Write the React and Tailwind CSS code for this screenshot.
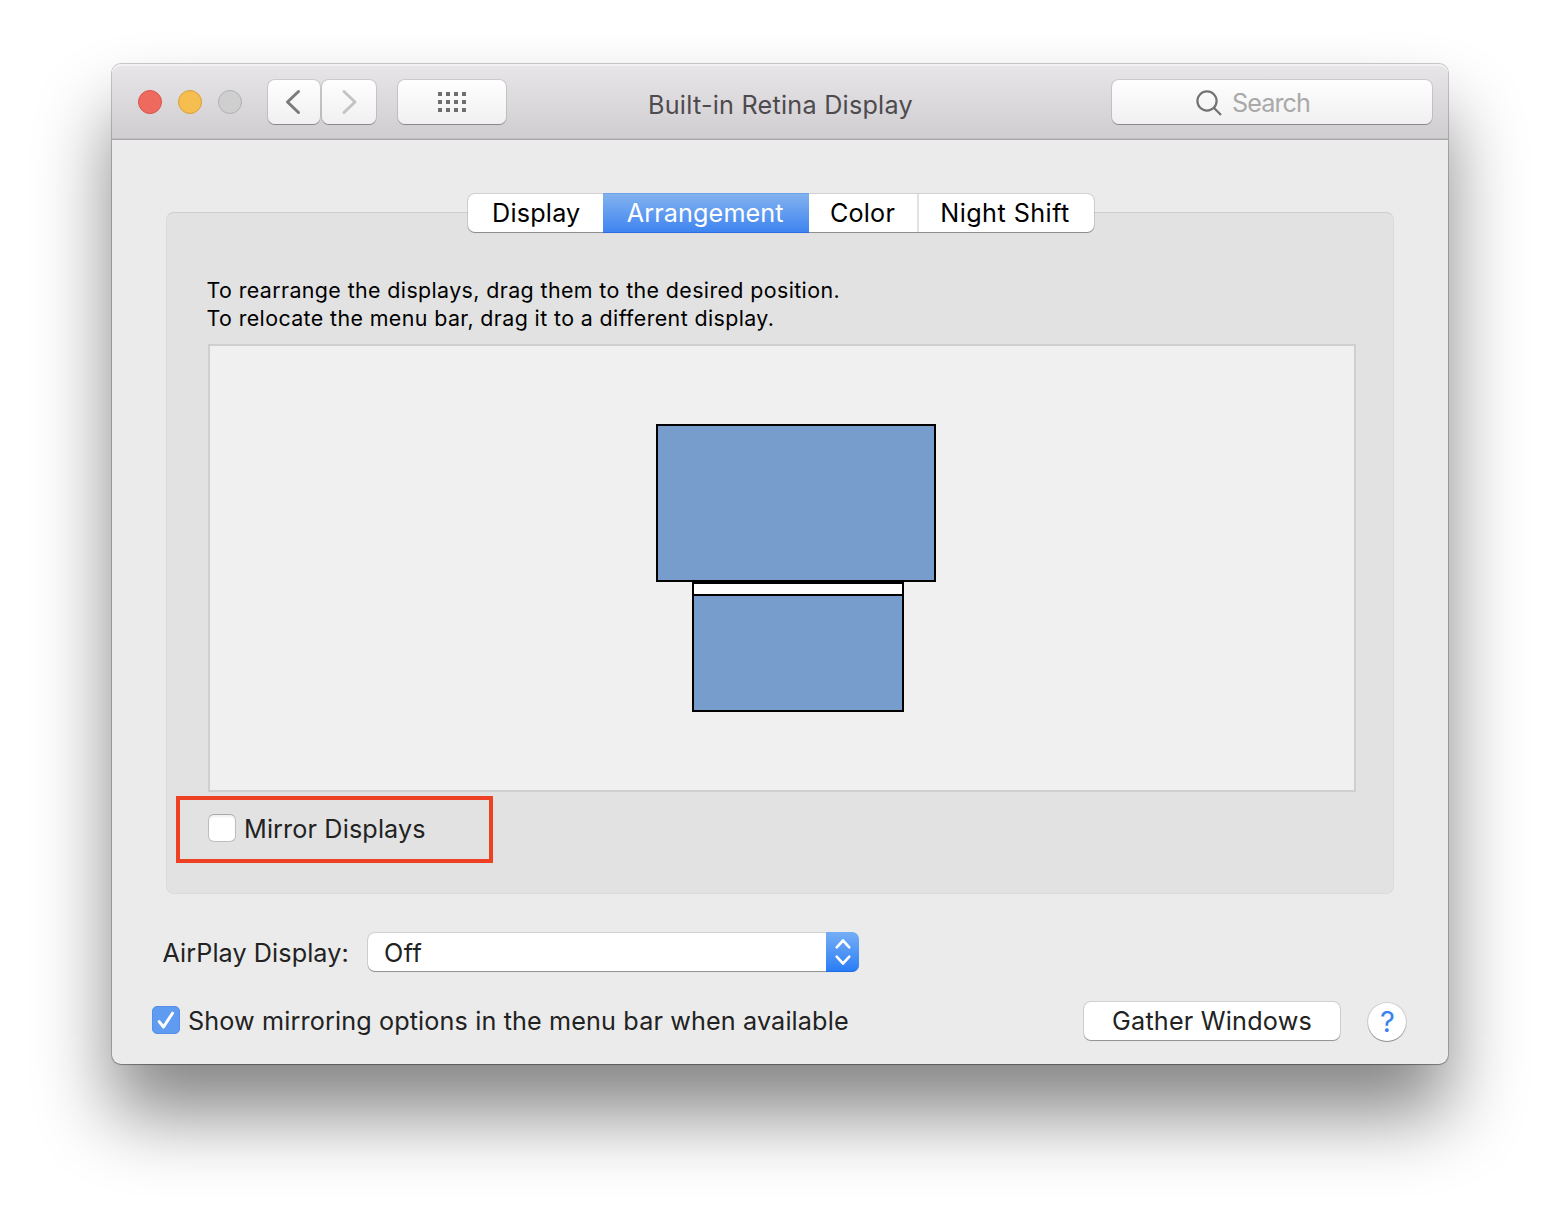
import React from 'react';

const toolButton =
  'flex h-11 shrink-0 items-center justify-center rounded-[7px] bg-linear-to-b from-[#fefefe] to-[#f0f0f0] shadow-[0_0_0_1px_rgba(0,0,0,0.1),0_1px_0_0_rgba(0,0,0,0.18),0_1px_1px_0_rgba(0,0,0,0.12)]';

const pushButton =
  'bg-white shadow-[0_0_0_1px_rgba(0,0,0,0.11),0_1px_0_0_rgba(0,0,0,0.2),0_1px_1px_0_rgba(0,0,0,0.12)]';

function TrafficLights() {
  return (
    <div className="flex gap-4">
      <span className="size-6 rounded-full border border-[#d9544a] bg-[#ee6a5f]" />
      <span className="size-6 rounded-full border border-[#d9a03c] bg-[#f5be4f]" />
      <span className="size-6 rounded-full border border-[#b1b0b2] bg-[#cfcfd0]" />
    </div>
  );
}

function TitleBar() {
  return (
    <header className="flex h-[76px] shrink-0 items-start rounded-t-[9px] border-b border-[#aaa8aa] bg-linear-to-b from-[#e8e6e9] to-[#d0cdd1] pr-4 pl-[26px] shadow-[inset_0_2px_0_rgba(255,255,255,0.45),inset_0_-1px_0_rgba(0,0,0,0.07)]">
      <div className="pt-[26px]">
        <TrafficLights />
      </div>
      <div className="ml-[26px] flex gap-0.5 pt-4">
        <button className={`${toolButton} w-[52px]`}>
          <svg width="20" height="28" viewBox="0 0 20 28" fill="none" stroke="#7a7a7a" strokeWidth="3" strokeLinecap="round" strokeLinejoin="round">
            <path d="M14.5 3.5 3.5 14l11 10.5" />
          </svg>
        </button>
        <button className={`${toolButton} w-[54px]`}>
          <svg width="20" height="28" viewBox="0 0 20 28" fill="none" stroke="#c3c3c3" strokeWidth="3" strokeLinecap="round" strokeLinejoin="round">
            <path d="M5 3.5 16 14 5 24.5" />
          </svg>
        </button>
      </div>
      <div className="ml-[22px] pt-4">
        <button className={`${toolButton} w-[108px]`}>
          <span className="grid grid-cols-4 gap-1">
            {Array.from({ length: 12 }, (_, i) => (
              <span key={i} className="size-1 bg-[#6e6e6e]" />
            ))}
          </span>
        </button>
      </div>
      <h1 className="ml-[142px] pt-[21px] text-[25.2px] leading-10 font-normal tracking-[0.24px] whitespace-nowrap text-[#4d4b4d]">
        Built-in Retina Display
      </h1>
      <div className="ml-auto pt-4">
        <div className={`${toolButton} w-80 justify-start! gap-[9px] pl-[83px]`}>
          <svg className="mt-0.5" width="28" height="28" viewBox="0 0 28 28" fill="none" stroke="#727272" strokeWidth="2.2">
            <circle cx="12" cy="12" r="9.6" />
            <path d="m18.8 18.8 7.2 7.2" />
          </svg>
          <span className="pt-0.5 text-[25.2px] leading-10 tracking-[-0.95px] text-[#a9a9a9]">Search</span>
        </div>
      </div>
    </header>
  );
}

function Tabs() {
  return (
    <nav className={`${pushButton} flex h-[38px] w-[626px] rounded-[7px] text-[25.2px] leading-[38px] text-black`}>
      <button className="w-[135px] pl-[1.5px] tracking-[0.2px]">Display</button>
      <button className="-my-px h-10 w-[206px] border-y border-t-[#6ba3ec] border-b-[#2d6be0] bg-linear-to-b from-[#82b1ee] to-[#3f84f1] pr-[1.5px] leading-[38px] tracking-[0.1px] text-white">
        Arrangement
      </button>
      <button className="w-[108px] pr-px tracking-[0.2px]">Color</button>
      <span className="w-0.5 bg-[#e2e2e2]" />
      <button className="w-[175px] pr-[3px] tracking-[0.45px]">Night Shift</button>
    </nav>
  );
}

function Arrangement() {
  return (
    <div className="mt-3 flex h-[448px] w-[1148px] flex-col border-2 border-[#cfcfcf] bg-[#f0f0f0] pt-[78px]">
      <div className="ml-[446px] h-[158px] w-[280px] shrink-0 border-2 border-black bg-[#769dcc]" />
      <div className="ml-[482px] h-[130px] w-[212px] shrink-0 border-2 border-black bg-[#769dcc]">
        <div className="h-3 border-b-2 border-black bg-white" />
      </div>
    </div>
  );
}

function Panel() {
  return (
    <section className="mt-[-20px] flex h-[682px] w-[1228px] shrink-0 flex-col rounded-[8px] border border-[#dadada] border-t-[#cecece] bg-[#e2e2e2] pl-[41px]">
      <p className="mt-[63px] -ml-[1.5px] text-[21.4px] leading-7 whitespace-nowrap text-black">
        <span className="block tracking-[0.39px]">To rearrange the displays, drag them to the desired position.</span>
        <span className="block tracking-[0.39px]">To relocate the menu bar, drag it to a different display.</span>
      </p>
      <Arrangement />
      <div className="mt-1 ml-[-32px] flex h-[67px] w-[317px] items-start border-4 border-[#ee4023] pt-3.5 pl-7">
        <span className="size-7 rounded-[6px] border border-[#bdbdbd] border-t-[#a9a9a9] bg-white shadow-[inset_0_2px_2px_rgba(0,0,0,0.06)]" />
        <span className="ml-2 text-[25.2px] leading-[30px] tracking-[0.13px] whitespace-nowrap text-[#222]">Mirror Displays</span>
      </div>
    </section>
  );
}

function AirPlayRow() {
  return (
    <div className="mt-[39px] flex items-start pl-[50.5px] text-[25.2px] leading-10 text-[#222]">
      <span className="w-[205.5px] tracking-[0.08px] whitespace-nowrap">AirPlay Display:</span>
      <div className={`${pushButton} flex h-[38px] w-[490px] items-start rounded-[7px]`}>
        <span className="flex-1 pl-4 tracking-[0.5px]">Off</span>
        <span className="-mt-px -mr-px flex h-10 w-[33px] items-center justify-center rounded-r-[7px] border-b border-[#1f6ae6] bg-linear-to-b from-[#74aef5] to-[#2a7df5]">
          <svg width="18" height="28" viewBox="0 0 18 28" fill="none" stroke="#fff" strokeWidth="2.6" strokeLinecap="round" strokeLinejoin="round">
            <path d="m2.7 9.3 6.3-6.8 6.3 6.8M2.7 18.7 9 25.5l6.3-6.8" />
          </svg>
        </span>
      </div>
    </div>
  );
}

function BottomRow() {
  return (
    <div className="mt-[29px] flex items-start pl-10 text-[25.2px] leading-[38px] text-[#222]">
      <span className="mt-1 flex size-7 items-center justify-center rounded-[5px] border border-[#5590e6] bg-[#5f9bf0]">
        <svg className="shrink-0" width="28" height="28" viewBox="0 0 28 28" fill="none" stroke="#fff" strokeWidth="3" strokeLinecap="round" strokeLinejoin="round">
          <path d="m7.2 15.6 4.3 5.4 9-13.8" />
        </svg>
      </span>
      <span className="ml-2 tracking-[0.13px] whitespace-nowrap">Show mirroring options in the menu bar when available</span>
      <button className={`${pushButton} mr-7 ml-auto h-[38px] w-64 rounded-[7px] tracking-[0.2px]`}>Gather Windows</button>
      <button className={`${pushButton} mt-px mr-[42px] size-[38px] rounded-full pl-px text-[29px] text-[#3b82f0]`}>?</button>
    </div>
  );
}

export default function App() {
  return (
    <div className="h-[1224px] w-[1560px] overflow-hidden bg-white px-28 pt-16 font-['Inter',sans-serif]">
      <main className="flex h-[1000px] w-[1336px] flex-col rounded-[9px] bg-[#ebebeb] shadow-[0_0_0_1px_rgba(0,0,0,0.2),0_1px_1px_rgba(0,0,0,0.2),0_50px_76px_rgba(0,0,0,0.48)]">
        <TitleBar />
        <div className="flex flex-col items-center pt-[54px]">
          <div className="relative z-10 ml-0.5">
            <Tabs />
          </div>
          <Panel />
        </div>
        <AirPlayRow />
        <BottomRow />
      </main>
    </div>
  );
}
